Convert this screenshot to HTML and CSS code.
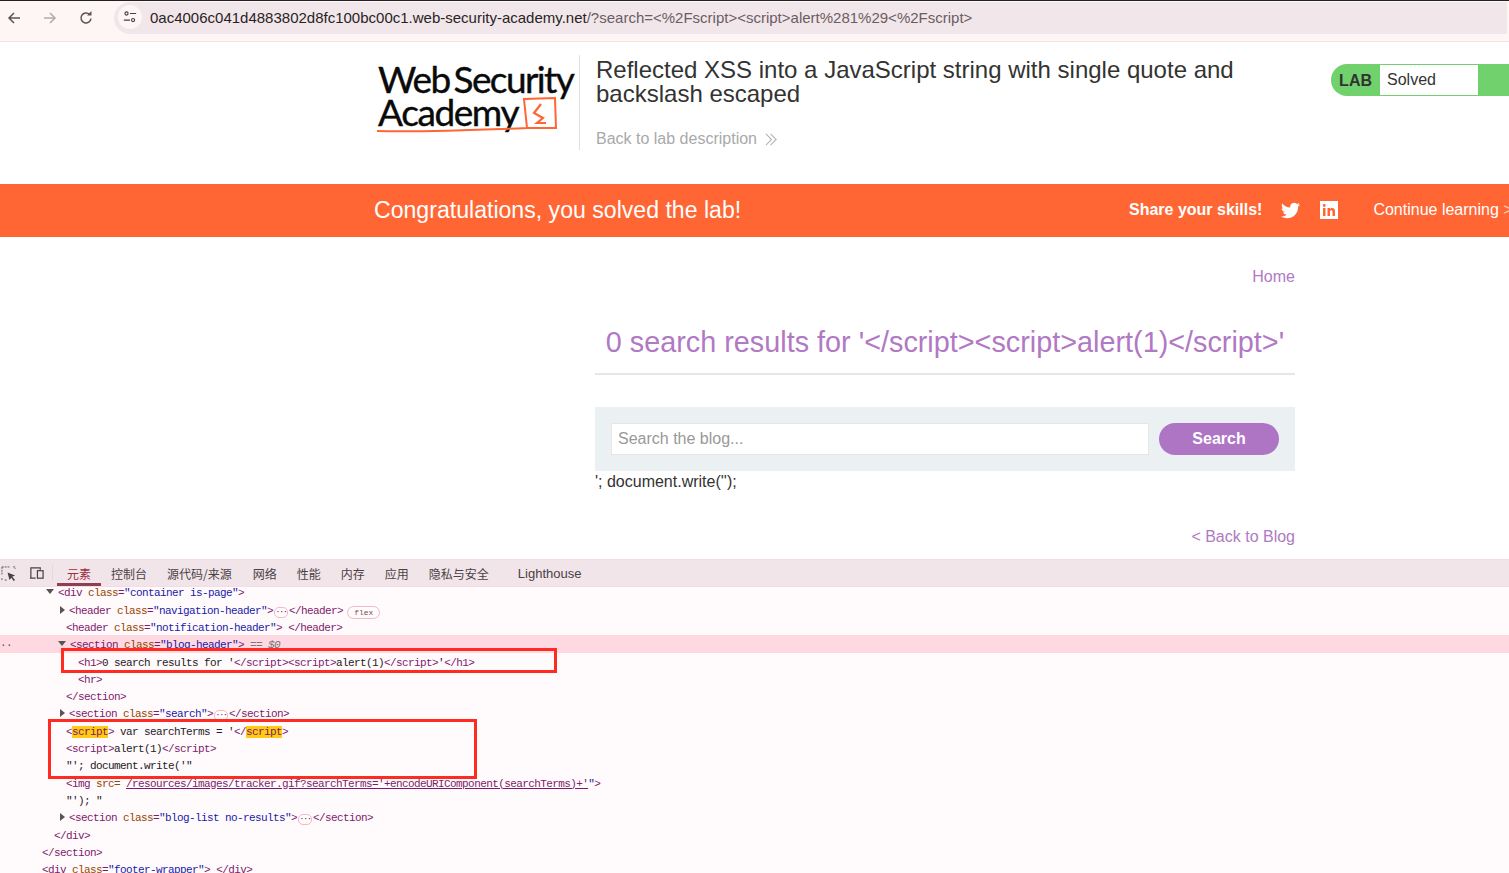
FILE: index.html
```html
<!DOCTYPE html>
<html lang="en">
<head>
<meta charset="utf-8">
<title>Reflected XSS</title>
<link rel="stylesheet" href="styles.css">
</head>
<body>
<div class="toolbar">
  <svg class="nav-icon" viewBox="0 0 16 16"><path d="M14 8H3M8 3 3 8l5 5" fill="none" stroke="#5f5256" stroke-width="1.5"/></svg>
  <svg class="nav-icon" viewBox="0 0 16 16"><path d="M2 8h11M8 3l5 5-5 5" fill="none" stroke="#b3a9ac" stroke-width="1.5"/></svg>
  <svg class="nav-icon" viewBox="0 0 16 16"><path d="M13 8.500A5 5 0 1 1 11.500 4.400" fill="none" stroke="#5f5256" stroke-width="1.5"/><path d="M9 5.500h4.500V1z" fill="#5f5256"/></svg>
  <div class="urlbar">
    <span class="site-chip"><svg viewBox="0 0 16 16" class="tune"><circle cx="4" cy="4" r="1.800" fill="none" stroke="#4a3f43" stroke-width="1.300"/><path d="M8 4h7M1 11.500h7" stroke="#4a3f43" stroke-width="1.300"/><circle cx="11.500" cy="11.500" r="1.800" fill="none" stroke="#4a3f43" stroke-width="1.300"/></svg></span>
    <span class="url">0ac4006c041d4883802d8fc100bc00c1.web-security-academy.net<span class="url-path">/?search=&lt;%2Fscript&gt;&lt;script&gt;alert%281%29&lt;%2Fscript&gt;</span></span>
  </div>
</div>

<header class="lab-header">
  <div class="logo">
    <span class="logo-line first">Web Security</span>
    <span class="logo-line">Academy</span>
    <svg class="logo-mark" viewBox="0 0 200 40"><path d="M1 35c50 1 100-1 150-3l29 0-1-30-31 1 3 29" fill="none" stroke="#ff6633" stroke-width="2"/><path d="M165 8l-7 9 9 5-6 5 9 0" fill="none" stroke="#ff6633" stroke-width="2.200"/></svg>
  </div>
  <div class="lab-title">
    <h2>Reflected XSS into a JavaScript string with single quote and backslash escaped</h2>
    <a class="back-link">Back to lab description
      <svg class="chev" viewBox="0 0 14 14"><path d="M1 1l6 6-6 6M6 1l6 6-6 6" fill="none" stroke="#b5b5b5" stroke-width="1.200"/></svg>
    </a>
  </div>
  <div class="lab-status">
    <span class="lab-tag">LAB</span>
    <span class="lab-state">Solved</span>
  </div>
</header>

<div class="banner">
  <h4>Congratulations, you solved the lab!</h4>
  <div class="share">
    <span class="share-text">Share your skills!</span>
    <svg class="share-icon" viewBox="0 0 24 24"><path fill="#fff" d="M23.950 4.570a10 10 0 0 1-2.820.770 4.960 4.960 0 0 0 2.160-2.720c-.950.550-2 .950-3.130 1.180a4.920 4.920 0 0 0-8.380 4.480A13.990 13.990 0 0 1 1.640 3.160a4.820 4.820 0 0 0-.67 2.480c0 1.710.870 3.210 2.190 4.100a4.900 4.900 0 0 1-2.230-.620v.060a4.920 4.920 0 0 0 3.950 4.830 5 5 0 0 1-2.210.080 4.940 4.940 0 0 0 4.610 3.420A9.870 9.870 0 0 1 0 19.540a14 14 0 0 0 7.560 2.210c9.050 0 14-7.500 14-13.980 0-.210 0-.420-.020-.630a9.930 9.930 0 0 0 2.460-2.550z"/></svg>
    <svg class="share-icon li" viewBox="0 0 18 18"><path fill="#fff" fill-rule="evenodd" d="M0 0h18v18H0zM3 7v8h2.500V7zM4.250 3a1.450 1.450 0 1 0 0 2.900 1.450 1.450 0 0 0 0-2.900zM7.500 7v8H10v-4.200c0-2.200 2.500-2.200 2.500 0V15H15v-5c0-3.800-4-3.600-5-1.800V7z"/></svg>
    <span class="continue">Continue learning <span class="continue-arrow">&gt;</span></span>
  </div>
</div>

<main class="blog">
  <nav class="home-nav"><a>Home</a></nav>
  <section class="blog-header">
    <h1>0 search results for '&lt;/script&gt;&lt;script&gt;alert(1)&lt;/script&gt;'</h1>
    <hr>
  </section>
  <section class="search">
    <span class="search-input">Search the blog...</span>
    <span class="search-button">Search</span>
  </section>
  <p class="leftover">'; document.write('');</p>
  <div class="back-blog"><a>&lt; Back to Blog</a></div>
</main>

<section class="devtools">
  <div class="dt-tabs">
    <svg class="dt-icon" viewBox="0 0 16 16"><path d="M1 1h9M1 1v9M1 13v2M4 15h2M13 1h2v2" fill="none" stroke="#555" stroke-width="1" stroke-dasharray="2 1"/><path d="M7 7l8 3-3 1.500 3 3.500-1.500 1-2.500-3.500L9 15z" fill="#444"/></svg>
    <svg class="dt-icon second" viewBox="0 0 16 16"><path d="M2 13V2h10v2M1 13h6" fill="none" stroke="#444" stroke-width="1.300"/><rect x="9" y="5" width="6" height="8" fill="none" stroke="#444" stroke-width="1.300"/></svg>
    <span class="dt-sep"></span>
    <span class="tab active">元素</span>
    <span class="tab">控制台</span>
    <span class="tab wide">源代码/来源</span>
    <span class="tab">网络</span>
    <span class="tab">性能</span>
    <span class="tab">内存</span>
    <span class="tab">应用</span>
    <span class="tab">隐私与安全</span>
    <span class="tab lighthouse">Lighthouse</span>
  </div>
  <div class="dom">
    <div class="row i57"><i class="tri open"></i><b>&lt;div</b> <em>class</em><b>=</b><u>"container is-page"</u><b>&gt;</b></div>
    <div class="row i69"><i class="tri"></i><b>&lt;header</b> <em>class</em><b>=</b><u>"navigation-header"</u><b>&gt;</b><span class="dots">···</span><b>&lt;/header&gt;</b><span class="flex">flex</span></div>
    <div class="row i66"><b>&lt;header</b> <em>class</em><b>=</b><u>"notification-header"</u><b>&gt;</b> <b>&lt;/header&gt;</b></div>
    <div class="row i69 selected"><span class="gutter">··</span><i class="tri open"></i><b>&lt;section</b> <em>class</em><b>=</b><u>"blog-header"</u><b>&gt;</b> <span class="eq">== $0</span></div>
    <div class="row i78"><b>&lt;h1&gt;</b>0 search results for '<b>&lt;/script&gt;&lt;script&gt;</b>alert(1)<b>&lt;/script&gt;</b>'<b>&lt;/h1&gt;</b></div>
    <div class="row i78"><b>&lt;hr&gt;</b></div>
    <div class="row i66"><b>&lt;/section&gt;</b></div>
    <div class="row i69"><i class="tri"></i><b>&lt;section</b> <em>class</em><b>=</b><u>"search"</u><b>&gt;</b><span class="dots">···</span><b>&lt;/section&gt;</b></div>
    <div class="row i66"><b>&lt;<mark>script</mark>&gt;</b> var searchTerms = '<b>&lt;/<mark>script</mark>&gt;</b></div>
    <div class="row i66"><b>&lt;script&gt;</b>alert(1)<b>&lt;/script&gt;</b></div>
    <div class="row i66">"'; document.write('"</div>
    <div class="row i66"><b>&lt;img</b> <em>src=</em> <a class="src">/resources/images/tracker.gif?searchTerms='+encodeURIComponent(searchTerms)+'</a><u>"</u><b>&gt;</b></div>
    <div class="row i66">"'); "</div>
    <div class="row i69"><i class="tri"></i><b>&lt;section</b> <em>class</em><b>=</b><u>"blog-list no-results"</u><b>&gt;</b><span class="dots">···</span><b>&lt;/section&gt;</b></div>
    <div class="row i54"><b>&lt;/div&gt;</b></div>
    <div class="row i42"><b>&lt;/section&gt;</b></div>
    <div class="row i42"><b>&lt;div</b> <em>class</em><b>=</b><u>"footer-wrapper"</u><b>&gt;</b> <b>&lt;/div&gt;</b></div>
    <span class="callout one"></span>
    <span class="callout two"></span>
  </div>
</section>
</body>
</html>
```
FILE: styles.css
```css
* { box-sizing: border-box; }
html, body { margin: 0; height: 873px; overflow: hidden; background: #fff; }
body { font-family: "Liberation Sans", Arial, sans-serif; color: #333332; }
h1, h2, h4, p { margin: 0; font-weight: 400; }

.toolbar { height: 42px; display: flex; align-items: center; gap: 20px; padding: 0 0 6px 6px; background: #fdf6f5; border-top: 1px solid #222; border-bottom: 1px solid #f1e4e4; }
.nav-icon { width: 16px; height: 16px; flex: none; }
.urlbar { flex: 1; height: 32px; display: flex; align-items: center; background: #f1e6ea; border-radius: 16px 0 0 16px; margin-right: 2px; }
.site-chip { width: 24px; height: 24px; margin-left: 4px; margin-bottom: 2px; border-radius: 50%; background: #fdf6f5; display: flex; align-items: center; justify-content: center; }
.tune { width: 14px; height: 14px; }
.url { margin-left: 8px; margin-bottom: 2px; font-size: 15px; color: #2a1f24; white-space: nowrap; }
.url-path { color: #6b5d62; }

.lab-header { height: 142px; display: flex; align-items: flex-start; padding-left: 378px; }
.logo { width: 202px; height: 95px; margin-top: 13px; border-right: 1px solid #e0e0e0; position: relative; font-family: Lato, sans-serif; color: #0a0a0a; padding-top: 7px; }
.logo-line { display: block; font-size: 37px; line-height: 33px; letter-spacing: -1.400px; white-space: nowrap; -webkit-text-stroke: .4px #0a0a0a; }
.first { word-spacing: -4px; letter-spacing: -1.600px; }
.logo-mark { position: absolute; left: -2px; top: 41px; width: 200px; height: 40px; }
.lab-title { width: 660px; margin-left: 16px; margin-top: 16px; }
.lab-title h2 { font-size: 24px; line-height: 24px; color: #333332; }
.back-link { display: flex; align-items: center; gap: 8px; margin-top: 23px; font-size: 16px; line-height: 20px; color: #a9a9a9; }
.chev { width: 13px; height: 13px; }
.lab-status { margin-left: 75px; margin-top: 22px; flex: 1; height: 32px; display: flex; background: #70d16d; border-radius: 16px 0 0 16px; padding: 1px 0; }
.lab-tag { width: 49px; text-align: right; font-weight: 700; font-size: 16px; line-height: 31px; padding-right: 8px; }
.lab-state { width: 98px; background: #fff; font-size: 16px; line-height: 30px; padding-left: 7px; }

.banner { height: 53px; background: #ff6633; color: #fff; display: flex; align-items: center; padding-left: 374px; overflow: hidden; }
.banner h4 { font-size: 23.100px; white-space: nowrap; width: 755px; flex: none; }
.share { display: flex; align-items: center; white-space: nowrap; padding-bottom: 1px; flex: none; }
.share-text { font-size: 16px; font-weight: 700; }
.share-icon { width: 19px; height: 19px; margin-left: 19px; }
.li { width: 18px; height: 18px; margin-left: 20px; }
.continue { font-size: 16px; margin-left: 35px; }
.continue-arrow { color: #ffd0bd; }

.blog { height: 322px; padding: 0 214px 0 595px; }
.home-nav { height: 79px; padding-top: 30px; text-align: right; font-size: 16px; line-height: 20px; color: #b179c3; }
.blog-header { height: 91px; }
.blog-header h1 { font-size: 28.800px; line-height: 33px; color: #b179c3; text-align: center; padding-top: 10px; padding-bottom: 14px; white-space: nowrap; }
.blog-header hr { margin: 0; border: 0; border-top: 2px solid #e6e6e6; }
.search { height: 64px; background: #ebf0f2; padding: 16px; display: flex; gap: 10px; }
.search-input { flex: 1; height: 32px; background: #fff; border: 1px solid #e6e6e6; font-size: 16px; line-height: 30px; padding-left: 6px; color: #999; }
.search-button { width: 120px; height: 32px; border-radius: 16px; background: #ae75c5; color: #fff; font-weight: 700; font-size: 16px; line-height: 31px; text-align: center; }
.leftover { font-size: 16px; line-height: 20px; margin-top: 1px; }
.back-blog { margin-top: 35px; text-align: right; font-size: 16px; line-height: 20px; color: #b179c3; }

.devtools { height: 314px; background: #fffafc; overflow: hidden; }
.dt-tabs { height: 28px; display: flex; align-items: center; background: #f2e5ea; border-top: 1px solid #f7dbe4; border-bottom: 1px solid #f7dbe4; font-family: "Noto Sans CJK SC", sans-serif; font-size: 12px; color: #4a4245; padding-left: 1px; }
.dt-icon { width: 15px; height: 15px; flex: none; }
.second { margin-left: 13px; }
.dt-sep { width: 1px; height: 16px; margin: 0 14px 0 8px; background: #e8d6dc; }
.tab { height: 26px; line-height: 27px; margin-right: 20px; white-space: nowrap; }
.wide { margin-right: 21px; }
.active { color: #9a2f3f; box-shadow: inset 0 -3px 0 #8f3f52; margin-left: -10px; margin-right: 10px; padding: 0 10px; }
.lighthouse { margin-left: 9px; font-family: "Liberation Sans", sans-serif; font-size: 13px; }

.dom { position: relative; font-family: "Liberation Mono", monospace; font-size: 11px; letter-spacing: -.6px; margin-top: -3.600px; color: #222; }
.row { height: 17.300px; line-height: 21px; white-space: pre; position: relative; }
.row b { font-weight: 400; color: #7d1a6b; }
.row em { font-style: normal; color: #994500; }
.row u { text-decoration: none; color: #1a1aa6; }
.i42 { padding-left: 42px; } .i54 { padding-left: 54px; } .i57 { padding-left: 57px; }
.i66 { padding-left: 66px; } .i69 { padding-left: 69px; } .i78 { padding-left: 78px; }
.selected { background: #ffd9e2; }
.gutter { position: absolute; left: 0; top: 0; color: #555; }
.tri { display: inline-block; width: 0; height: 0; margin-left: -9px; margin-right: 4px; border-left: 5px solid #555; border-top: 4px solid transparent; border-bottom: 4px solid transparent; vertical-align: 0; }
.open { margin-left: -11px; margin-right: 4px; border-left: 4px solid transparent; border-right: 4px solid transparent; border-top: 5px solid #555; border-bottom: 0; vertical-align: 2px; }
.dots { display: inline-block; width: 14px; height: 11px; margin: 0 1px; line-height: 8px; border: 1px solid #f5b8c6; border-radius: 5px; text-align: center; font-size: 8px; vertical-align: 0; letter-spacing: -1px; }
.flex { display: inline-block; margin-left: 4px; padding: 0 6px; height: 13px; line-height: 11px; border: 1px solid #f5b8c6; border-radius: 7px; font-size: 8px; letter-spacing: 0; vertical-align: -1px; color: #7d4a55; }
.eq { color: #777; font-style: italic; }
mark { background: #ffcb14; color: #7d1a6b; }
.src { color: #7d1a6b; text-decoration: underline; }
.callout { position: absolute; border: 3px solid #ff2a20; }
.one { left: 61px; top: 65px; width: 496px; height: 25px; }
.two { left: 48px; top: 135.600px; width: 429px; height: 60px; }
```
